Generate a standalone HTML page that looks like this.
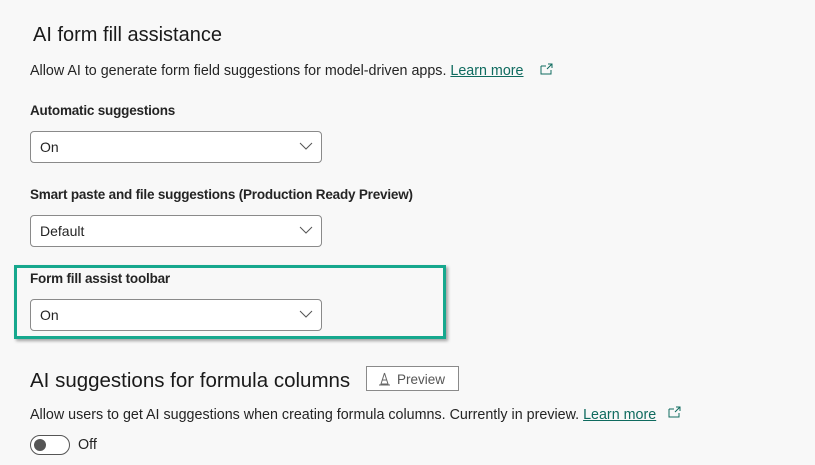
<!DOCTYPE html>
<html><head><style>
body{margin:0;width:815px;height:465px;background:#f8f8f8;font-family:"Liberation Sans",sans-serif;color:#242424;position:relative;overflow:hidden}
.a{position:absolute;white-space:nowrap}
.h{font-size:20.5px;color:#1a1a1a}
.t{font-size:14.3px}
.l{font-size:13.5px;font-weight:bold;letter-spacing:-0.2px}
.dd{position:absolute;left:30px;width:292px;height:30px;border:1px solid #8a8a8a;border-radius:4px;background:#fff;box-sizing:border-box}
.dd span{position:absolute;left:9px;top:7px;font-size:14px}
.dd svg{position:absolute;right:8px;top:10px}
a{color:#0f6b5f;text-decoration:underline}
</style></head><body>
<div class="a h" style="left:33px;top:24px;font-size:20px">AI form fill assistance</div>
<div class="a t" style="left:30px;top:63px">Allow AI to generate form field suggestions for model-driven apps. <a>Learn more</a></div>
<svg class="a" style="left:540px;top:63px" width="13" height="12"><path d="M1 3h5M1 3v8h10V7M8 1h4v4M12 1L7 6" stroke="#0f6b5f" fill="none"/></svg>
<div class="a l" style="left:30px;top:103px">Automatic suggestions</div>
<div class="dd" style="top:131px;height:32px"><span>On</span><svg width="14" height="9"><path d="M1 1l6 6 6-6" stroke="#555" fill="none"/></svg></div>
<div class="a l" style="left:30px;top:187px">Smart paste and file suggestions (Production Ready Preview)</div>
<div class="dd" style="top:215px;height:32px"><span>Default</span><svg width="14" height="9"><path d="M1 1l6 6 6-6" stroke="#555" fill="none"/></svg></div>
<div class="a" style="left:14px;top:265px;width:432px;height:74px;border:3px solid #17a88e;box-sizing:border-box;box-shadow:2px 2px 3px rgba(0,0,0,.35)"></div>
<div class="a l" style="left:30px;top:271px">Form fill assist toolbar</div>
<div class="dd" style="top:299px;height:32px"><span>On</span><svg width="14" height="9"><path d="M1 1l6 6 6-6" stroke="#555" fill="none"/></svg></div>
<div class="a h" style="left:30px;top:369px">AI suggestions for formula columns</div>
<div class="a" style="left:366px;top:366px;width:93px;height:25px;border:1px solid #8a8a8a;box-sizing:border-box;background:#fff;font-size:13.5px;color:#555"><svg style="position:absolute;left:12px;top:5px" width="11" height="14"><path d="M5.5 1L2 12h7L5.5 1M0 13h11M3.5 8h4" stroke="#666" fill="none"/></svg><span style="position:absolute;left:30px;top:5px">Preview</span></div>
<div class="a t" style="left:30px;top:407px">Allow users to get AI suggestions when creating formula columns. Currently in preview. <a>Learn more</a></div>
<svg class="a" style="left:668px;top:406px" width="13" height="12"><path d="M1 3h5M1 3v8h10V7M8 1h4v4M12 1L7 6" stroke="#0f6b5f" fill="none"/></svg>
<div class="a" style="left:30px;top:435px;width:40px;height:20px;border:1px solid #555;border-radius:10px;box-sizing:border-box;background:#fff"><div style="position:absolute;left:3px;top:3px;width:12px;height:12px;border-radius:50%;background:#555"></div></div>
<div class="a t" style="left:78px;top:437px">Off</div>
</body></html>
